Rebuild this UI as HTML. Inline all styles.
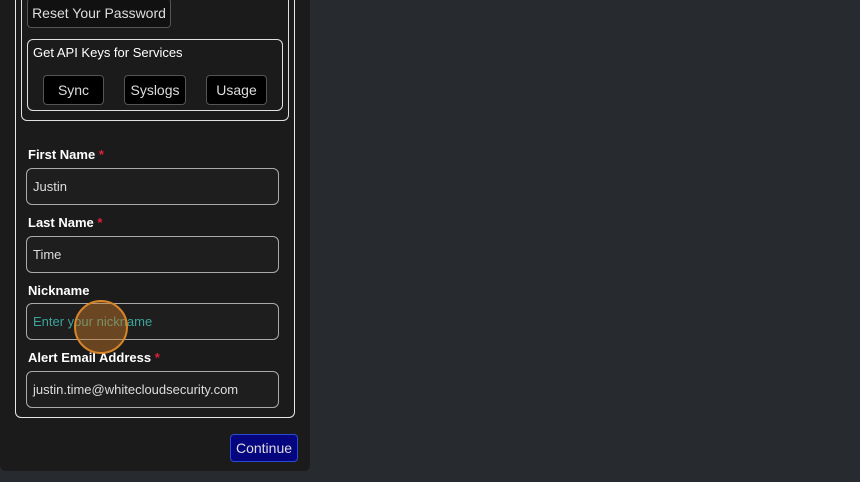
<!DOCTYPE html>
<html><head><style>
body{margin:0;width:860px;height:482px;background:#272a2e;position:relative;overflow:hidden;font-family:"Liberation Sans",sans-serif;color:#fff}
.a{position:absolute;box-sizing:border-box}
.panel{left:0;top:-10px;width:310px;height:481px;background:#1b1b1b;border-radius:0 0 6px 6px}
.outer{left:15px;top:-10px;width:280px;height:428px;border:1px solid #e8e8e8;border-top:none;border-radius:0 0 6px 6px}
.inner{left:21px;top:-10px;width:268px;height:131px;border:1px solid #e0e0e0;border-top:none;border-radius:0 0 6px 6px}
.btn{background:#000;border:1px solid #555;border-radius:4px;color:#ddd;font-size:14px;display:flex;align-items:center;justify-content:center}
.api{left:27px;top:39px;width:256px;height:72px;border:1px solid #e0e0e0;border-radius:6px}
.lbl{font-size:13px;font-weight:bold;left:28px}
.lbl span{color:#e0203a}
.inp{left:26px;width:253px;height:37px;border:1px solid #aaa;border-radius:6px;background:#1e1e1e;font-size:13px;color:#ddd;padding:0 0 0 6px;display:flex;align-items:center}
</style></head><body>
<div class="a panel"></div>
<div class="a outer"></div>
<div class="a inner"></div>
<div class="a btn" style="left:27px;top:-2px;width:144px;height:30px;background:#111;font-size:14px">Reset Your Password</div>
<div class="a api"></div>
<div class="a" style="left:33px;top:45px;font-size:13px">Get API Keys for Services</div>
<div class="a btn" style="left:43px;top:75px;width:61px;height:30px">Sync</div>
<div class="a btn" style="left:124px;top:75px;width:62px;height:30px">Syslogs</div>
<div class="a btn" style="left:206px;top:75px;width:61px;height:30px">Usage</div>
<div class="a lbl" style="top:147px">First Name <span>*</span></div>
<div class="a inp" style="top:168px">Justin</div>
<div class="a lbl" style="top:215px">Last Name <span>*</span></div>
<div class="a inp" style="top:236px">Time</div>
<div class="a lbl" style="top:283px">Nickname</div>
<div class="a inp" style="top:303px;color:#3aa59a">Enter your nickname</div>
<div class="a lbl" style="top:350px">Alert Email Address <span>*</span></div>
<div class="a inp" style="top:371px">justin.time@whitecloudsecurity.com</div>
<div class="a" style="left:74px;top:300px;width:54px;height:54px;border-radius:50%;border:2px solid #d8852a;background:rgba(200,120,40,0.45)"></div>
<div class="a" style="left:230px;top:434px;width:68px;height:28px;background:#050580;border:1px solid #2a4ad0;border-radius:4px;color:#ddd;font-size:14px;display:flex;align-items:center;justify-content:center">Continue</div>
</body></html>
